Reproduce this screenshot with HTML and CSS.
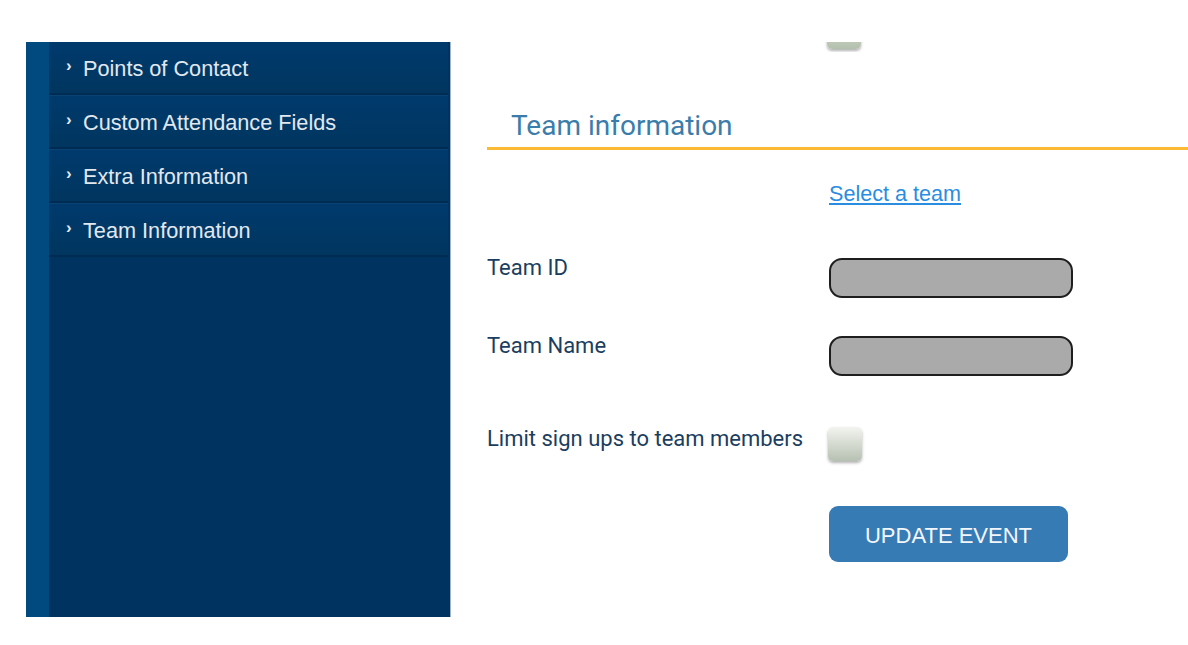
FILE: index.html
```html
<!DOCTYPE html>
<html lang="en">
<head>
<meta charset="utf-8">
<title>Team information</title>
<link rel="stylesheet" href="styles.css">
</head>
<body>
<div class="page">
  <aside class="sidebar">
    <div class="stripe"></div>
    <nav class="menu">
      <a class="item" href="#"><span class="chev">›</span><span>Points of Contact</span></a>
      <a class="item" href="#"><span class="chev">›</span><span>Custom Attendance Fields</span></a>
      <a class="item" href="#"><span class="chev">›</span><span>Extra Information</span></a>
      <a class="item" href="#"><span class="chev">›</span><span>Team Information</span></a>
    </nav>
  </aside>
  <main class="content">
    <div class="clip"><span class="check"></span></div>
    <h2 class="heading">Team information</h2>
    <div class="row link-row"><a class="link" href="#">Select a team</a></div>
    <div class="row field-row first">
      <label class="label">Team ID</label>
      <span class="input"></span>
    </div>
    <div class="row field-row second">
      <label class="label">Team Name</label>
      <span class="input"></span>
    </div>
    <div class="row field-row third">
      <label class="label">Limit sign ups to team members</label>
      <span class="check"></span>
    </div>
    <div class="row button-row"><button class="button">UPDATE EVENT</button></div>
  </main>
</div>
</body>
</html>
```
FILE: styles.css
```css
html, body {
  margin: 0;
  padding: 0;
  background: #ffffff;
}
.page {
  display: flex;
  align-items: flex-start;
  padding-left: 26px;
  width: 1162px;
  height: 645px;
  overflow: hidden;
}
.sidebar {
  margin-top: 42px;
  height: 575px;
  display: flex;
  flex: none;
}
.stripe {
  width: 23px;
  background: #004a80;
}
.menu {
  width: 399px;
  padding-right: 2px;
  background: #00335f;
  border-right: 1px solid #9fb3c9;
  display: flex;
  flex-direction: column;
}
.item {
  display: flex;
  align-items: center;
  height: 48px;
  padding-top: 3px;
  padding-left: 17px;
  background: linear-gradient(#003a6d, #00365f);
  border-top: 1px solid #0b4274;
  border-bottom: 2px solid #002b52;
  color: #e2e8ef;
  text-decoration: none;
  font-family: "Liberation Sans", Arial, sans-serif;
  font-size: 21.7px;
}
.item:first-child {
  border-top: none;
  height: 49px;
  padding-top: 2px;
}
.chev {
  width: 17px;
  font-size: 17px;
  font-weight: 700;
  position: relative;
  top: -3px;
}
.content {
  margin-left: 36px;
  width: 701px;
  flex: none;
  font-family: Roboto, "Liberation Sans", sans-serif;
}
.clip {
  margin-top: 42px;
  height: 10px;
  overflow: hidden;
  display: flex;
  align-items: flex-end;
  padding-left: 341px;
}
.clip .check {
  flex: none;
  margin-bottom: 3px;
  background: linear-gradient(#dfe4da, #b4c0ae);
}
.heading {
  margin: 58px 0 0;
  padding: 0 0 5px 24px;
  font-size: 28px;
  line-height: 32px;
  font-weight: 400;
  color: #3b7daa;
  border-bottom: 3px solid #fcb934;
}
.row {
  display: flex;
  align-items: flex-start;
}
.link-row {
  margin-top: 32px;
  padding-left: 342px;
}
.link {
  font-family: "Liberation Sans", Arial, sans-serif;
  font-size: 21.6px;
  line-height: 24px;
  color: #2a8ddf;
  text-decoration: underline;
  text-underline-offset: 2px;
}
.label {
  width: 342px;
  flex: none;
  font-size: 22px;
  line-height: 22px;
  color: #1b3e60;
}
.first { margin-top: 52px; }
.first .label { margin-top: -1px; }
.second { margin-top: 38px; }
.second .label { margin-top: -1px; }
.third { margin-top: 51px; }
.third .label { margin-top: 1px; }
.input {
  width: 240px;
  height: 36px;
  background: #aaaaaa;
  border: 2px solid #1e1e1e;
  border-radius: 13px;
}
.check {
  display: block;
  width: 34px;
  height: 34px;
  margin-left: -1px;
  border-radius: 5px;
  background: linear-gradient(#f3f4ef, #b6c1b2);
  box-shadow: 0 2px 3px rgba(0, 0, 0, 0.3);
}
.button-row {
  margin-top: 45px;
  padding-left: 342px;
}
.button {
  width: 239px;
  height: 56px;
  border: none;
  border-radius: 9px;
  background: #377bb5;
  color: #f3f6fa;
  font-family: "Liberation Sans", Arial, sans-serif;
  font-size: 22px;
  padding: 4px 0 0;
}
```
